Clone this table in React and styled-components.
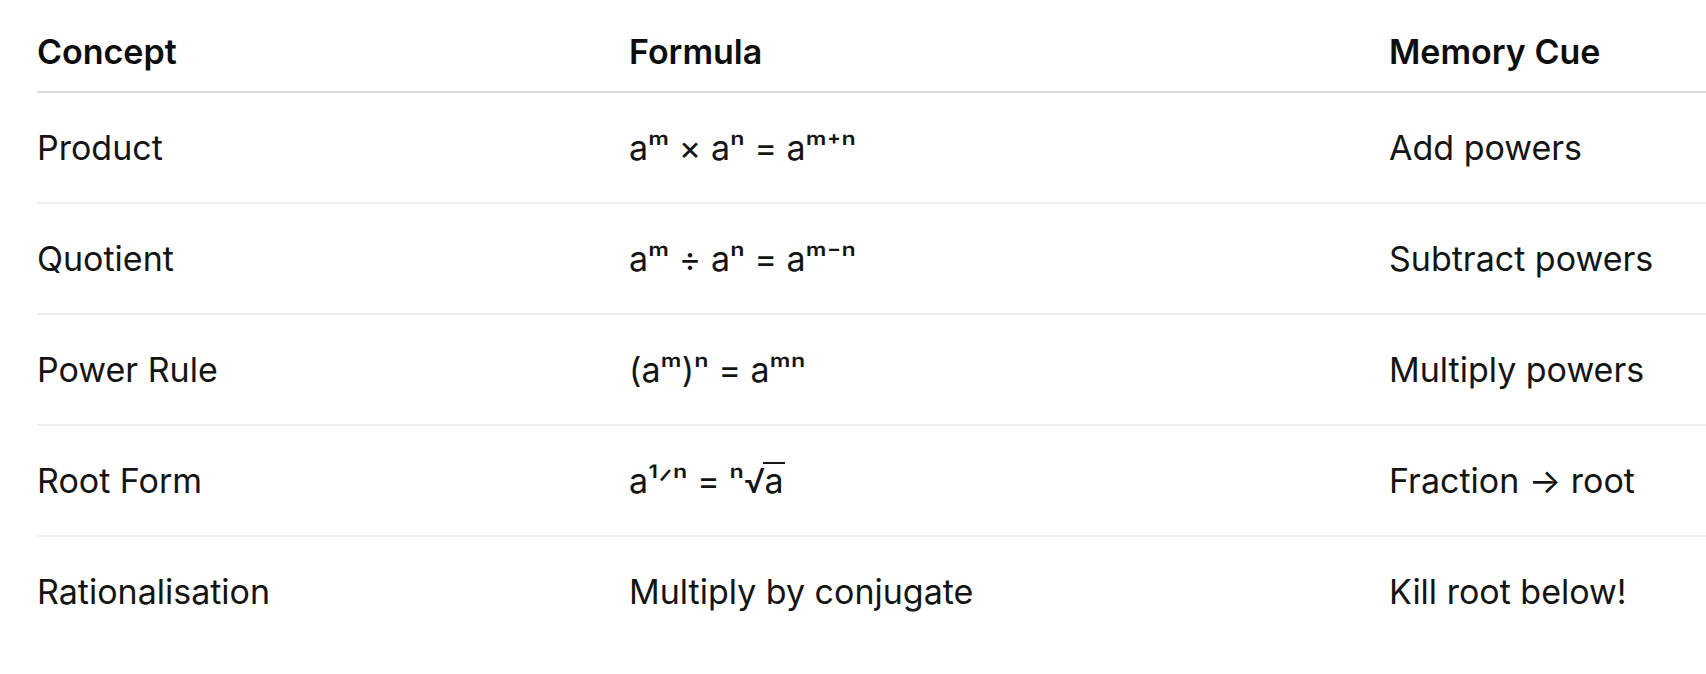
import styled, { createGlobalStyle } from "styled-components";

const GlobalStyle = createGlobalStyle`
  html, body {
    margin: 0;
    padding: 0;
    background: #ffffff;
  }
  body {
    font-family: Inter, "Noto Sans", "DejaVu Sans", sans-serif;
    color: #111111;
  }
`;

const Radicand = styled.span`
  display: inline-block;
  border-top: 2px solid currentColor;
  line-height: 33px;
  padding: 0 1px;
  margin-left: -2px;
`;

const rows = [
  { concept: "Product", formula: "aᵐ × aⁿ = aᵐ⁺ⁿ", cue: "Add powers" },
  { concept: "Quotient", formula: "aᵐ ÷ aⁿ = aᵐ⁻ⁿ", cue: "Subtract powers" },
  { concept: "Power Rule", formula: "(aᵐ)ⁿ = aᵐⁿ", cue: "Multiply powers" },
  {
    concept: "Root Form",
    formula: (
      <>
        a¹ᐟⁿ = ⁿ√<Radicand>a</Radicand>
      </>
    ),
    cue: "Fraction → root",
  },
  {
    concept: "Rationalisation",
    formula: "Multiply by conjugate",
    cue: "Kill root below!",
  },
];

const Page = styled.div`
  padding-left: 37px;
  overflow: hidden;
`;

const Table = styled.table`
  width: 100%;
  border-collapse: collapse;
  table-layout: fixed;
  font-size: 34px;
  line-height: 48px;
`;

const Head = styled.th`
  text-align: left;
  font-weight: 600;
  padding: 28px 0 15px;
  border-bottom: 2px solid #dadada;
  color: #0d0d0d;
`;

const Row = styled.tr`
  &:not(:last-child) td {
    border-bottom: 2px solid #efefef;
  }
`;

const Cell = styled.td`
  padding: 31px 0 30px;
  font-weight: 400;
  color: #141414;
  white-space: nowrap;
`;

export default function App() {
  return (
    <>
      <GlobalStyle />
      <Page>
        <Table>
          <colgroup>
            <col style={{ width: 592 }} />
            <col style={{ width: 760 }} />
            <col />
          </colgroup>
          <thead>
            <tr>
              <Head>Concept</Head>
              <Head>Formula</Head>
              <Head>Memory Cue</Head>
            </tr>
          </thead>
          <tbody>
            {rows.map((r) => (
              <Row key={r.concept}>
                <Cell>{r.concept}</Cell>
                <Cell>{r.formula}</Cell>
                <Cell>{r.cue}</Cell>
              </Row>
            ))}
          </tbody>
        </Table>
      </Page>
    </>
  );
}
